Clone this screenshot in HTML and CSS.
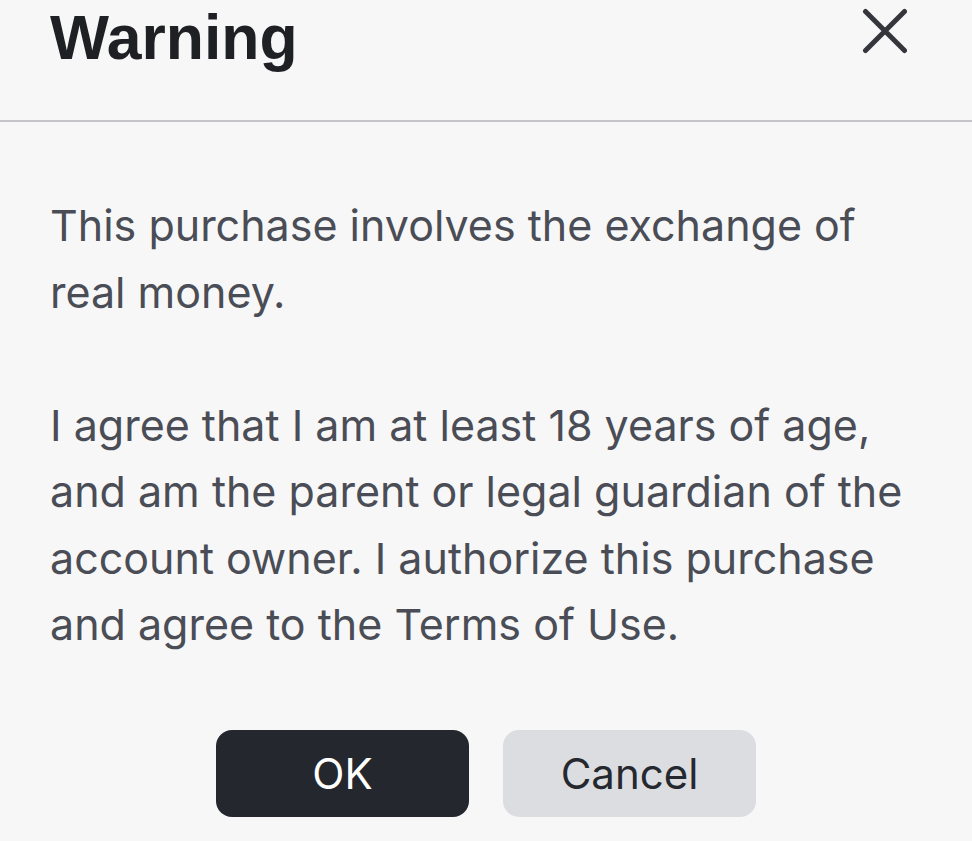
FILE: index.html
```html
<!DOCTYPE html>
<html lang="en">
<head>
<meta charset="utf-8">
<title>Warning</title>
<link rel="stylesheet" href="styles.css">
</head>
<body>
<div class="dialog">
  <header class="dialog-header">
    <h1 class="dialog-title">Warning</h1>
    <button class="close-btn" aria-label="Close">
      <svg width="48" height="48" viewBox="0 0 48 48" aria-hidden="true">
        <path d="M6.5 5.5 L45.5 44.5 M45.5 5.5 L6.5 44.5" stroke="#34363b" stroke-width="5" stroke-linecap="round" fill="none"/>
      </svg>
    </button>
  </header>
  <div class="dialog-body">
    <p class="dialog-text">This purchase involves the exchange of real money.</p>
    <p class="dialog-text">I agree that I am at least 18 years of age, and am the parent or legal guardian of the account owner. I authorize this purchase and agree to the Terms of Use.</p>
  </div>
  <div class="dialog-actions">
    <button class="btn btn-primary">OK</button>
    <button class="btn btn-secondary">Cancel</button>
  </div>
</div>
</body>
</html>
```

FILE: styles.css
```css
html, body {
  margin: 0;
  padding: 0;
  background: #f7f7f8;
}

.dialog {
  width: 972px;
  min-height: 841px;
  background: #f7f7f8;
}

.dialog-header {
  display: flex;
  justify-content: space-between;
  align-items: flex-start;
  height: 122px;
  padding: 0 65px 0 50px;
  box-sizing: border-box;
  border-bottom: 2px solid #c4c5c9;
}

.dialog-title {
  margin: 2px 0 0;
  font-family: "Liberation Sans", Arial, sans-serif;
  font-weight: 700;
  font-size: 62.5px;
  line-height: 70px;
  color: #1f2024;
}

.close-btn {
  margin-top: 6px;
  padding: 0;
  border: 0;
  background: none;
  width: 48px;
  height: 48px;
  display: block;
}

.close-btn svg {
  display: block;
}

.dialog-body {
  padding: 70px 50px 0 50px;
}

.dialog-text {
  margin: 0 0 66.5px;
  font-family: Inter, "Noto Sans", sans-serif;
  font-size: 43px;
  line-height: 66.5px;
  color: #4a4d55;
}

.dialog-text:last-child {
  margin-bottom: 0;
}

.dialog-actions {
  display: flex;
  justify-content: center;
  gap: 34px;
  padding-top: 72px;
}

.btn {
  width: 253px;
  height: 87px;
  border: 0;
  border-radius: 16px;
  font-family: Inter, "Noto Sans", sans-serif;
  font-size: 42px;
  font-weight: 400;
  padding: 0;
}

.btn-primary {
  background: #24272e;
  color: #ffffff;
}

.btn-secondary {
  background: #dcdde1;
  color: #25282f;
}
```
